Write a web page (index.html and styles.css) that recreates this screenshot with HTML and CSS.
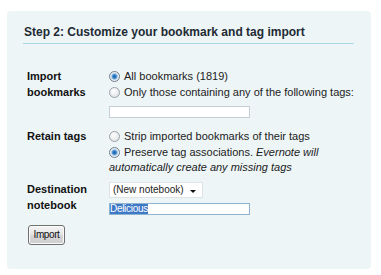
FILE: index.html
```html
<!DOCTYPE html>
<html>
<head>
<meta charset="utf-8">
<link rel="stylesheet" href="styles.css">
</head>
<body>
<div class="panel">
  <h2 class="title">Step 2: Customize your bookmark and tag import</h2>
  <div class="form">
    <div class="label">Import<br>bookmarks</div>
    <div class="controls">
      <div class="opt"><span class="radio on"></span>All bookmarks (1819)</div>
      <div class="opt"><span class="radio"></span>Only those containing any of the following tags:</div>
      <div class="textbox tags"></div>
    </div>

    <div class="label">Retain tags</div>
    <div class="controls">
      <div class="opt"><span class="radio"></span>Strip imported bookmarks of their tags</div>
      <div class="opt"><span class="radio on"></span>Preserve tag associations. <em>Evernote will</em></div>
      <div class="opt cont"><em>automatically create any missing tags</em></div>
    </div>

    <div class="label dest">Destination<br>notebook</div>
    <div class="controls dest">
      <div class="select"><span class="seltext">(New notebook)</span><span class="arrow"></span></div>
      <div class="textbox name"><span class="sel">Delicious</span></div>
    </div>
  </div>
  <div class="actions"><span class="button">Import</span></div>
</div>
</body>
</html>
```
FILE: styles.css
```css
html, body {
  margin: 0;
  padding: 0;
  background: #ffffff;
}
body {
  padding: 11px 10px 6px 7px;
  font-family: "Liberation Sans", Arial, sans-serif;
  color: #1a1a1a;
}
.panel {
  width: 364px;
  height: 258px;
  box-sizing: border-box;
  background: #edf5f7;
  border-radius: 4px;
  padding: 14px 17px 0 16px;
}
.title {
  margin: 0;
  font-size: 12px;
  font-weight: bold;
  color: #222a33;
  line-height: 14px;
  padding: 0 0 4px 1px;
  border-bottom: 1px solid #a9d7e3;
}
.form {
  display: grid;
  grid-template-columns: 86px 1fr;
  row-gap: 10px;
  margin-top: 24px;
  font-size: 11px;
  line-height: 16px;
}
.label {
  font-weight: bold;
  color: #111;
  padding-left: 4px;
}
.controls {
  display: flex;
  flex-direction: column;
  align-items: flex-start;
}
.dest { margin-top: -4px; }
.opt {
  display: flex;
  align-items: center;
  color: #222;
  white-space: nowrap;
}
.opt em { margin-left: 3px; }
.opt.cont { margin-top: -1px; }
.opt.cont em { margin-left: 0; }
.radio {
  width: 9px;
  height: 9px;
  border-radius: 50%;
  border: 1px solid #9aa3ab;
  background: radial-gradient(circle at 40% 35%, #ffffff 0%, #e4e6e8 70%, #c9cdd1 100%);
  margin-right: 4px;
  flex: none;
  box-sizing: content-box;
}
.radio.on {
  background: radial-gradient(circle at 50% 50%, #1d5fa8 0%, #3c87cf 30%, #9fc3e4 45%, #eef2f5 60%, #d4d8dc 100%);
  border-color: #6f7e8c;
}
.textbox {
  width: 141px;
  height: 12px;
  box-sizing: border-box;
  background: #fff;
  border: 1px solid #c6d0d8;
}
.tags { margin-top: 6px; }
.select {
  width: 94px;
  height: 16px;
  box-sizing: border-box;
  background: #fff;
  border: 1px solid #dde3e7;
  display: flex;
  align-items: center;
  justify-content: space-between;
  padding: 0 6px 0 3px;
  font-size: 10px;
  line-height: 14px;
  color: #222;
  margin-top: 1px;
  white-space: nowrap;
}
.arrow {
  width: 0;
  height: 0;
  border-left: 3px solid transparent;
  border-right: 3px solid transparent;
  border-top: 3px solid #111;
  margin-top: 2px;
  flex: none;
}
.name {
  margin-top: 5px;
  border-color: #8fb3cf;
  display: flex;
  align-items: center;
  font-size: 10px;
  line-height: 10px;
}
.sel {
  background: #3d79c6;
  color: #fff;
  letter-spacing: -0.3px;
}
.actions {
  margin-top: 9px;
  padding-left: 5px;
}
.button {
  display: inline-flex;
  align-items: center;
  justify-content: center;
  width: 37px;
  height: 20px;
  box-sizing: border-box;
  border: 1px solid #707070;
  border-radius: 3px;
  background: linear-gradient(#f4f4f4, #e4e4e4 50%, #d6d6d6 51%, #cfcfcf);
  font-size: 10px;
  color: #111;
  letter-spacing: -0.4px;
  box-shadow: inset 0 0 0 1px #fbfbfb;
}
```
